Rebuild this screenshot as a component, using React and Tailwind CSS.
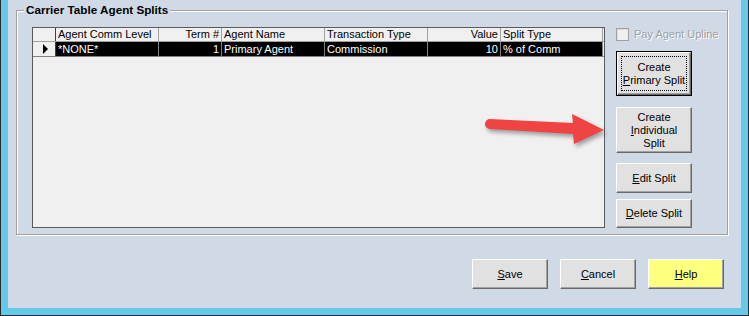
import React from "react";

const cols = [
  { label: "Agent Comm Level", w: "w-[103px]", align: "text-left", value: "*NONE*" },
  { label: "Term #", w: "w-[63px]", align: "text-right", value: "1" },
  { label: "Agent Name", w: "w-[103px]", align: "text-left", value: "Primary Agent" },
  { label: "Transaction Type", w: "w-[103px]", align: "text-left", value: "Commission" },
  { label: "Value", w: "w-[73px]", align: "text-right", value: "10" },
  { label: "Split Type", w: "w-[102px]", align: "text-left", value: "% of Comm" },
];

function WinButton({ className = "", children, focused = false }) {
  const face = (
    <div className="flex h-full w-full flex-col items-center justify-center border-t border-l border-t-white border-l-white border-r border-b border-r-[#696969] border-b-[#696969] text-center shadow-[inset_-1px_-1px_0_#a0a0a0]">
      {focused ? (
        <div className="m-[3px] flex h-[calc(100%-6px)] w-[calc(100%-6px)] flex-col items-center justify-center border border-dotted border-black">
          {children}
        </div>
      ) : (
        children
      )}
    </div>
  );
  return (
    <div className={`${focused ? "border border-black" : ""} ${className}`}>
      {face}
    </div>
  );
}

export default function App() {
  return (
    <div className="h-[316px] w-[749px] border-r border-b border-l border-[#2b2b2b] bg-[#66c9e8] pr-[7px] pb-[7px] pl-[7px] font-['Liberation_Sans',Arial,sans-serif] text-[11px] leading-[13px] text-black">
      <div className="relative h-full bg-[#d0dae6] pt-[10px]">
        {/* group box */}
        <div className="relative ml-[8px] flex h-[225px] w-[712px] border border-[#a0a0a0] pt-[16px] pl-[15px] shadow-[inset_1px_1px_0_#fff,1px_1px_0_#fff]">
          <div className="absolute -top-[9px] left-[7px] bg-[#d0dae6] px-[2px] text-[11.7px] leading-[15px] font-bold">
            Carrier Table Agent Splits
          </div>

          {/* grid */}
          <div className="h-[201px] w-[573px] border border-[#5a5a5a] bg-[#f0f0f0]">
            <div className="flex h-[14px] border-b border-[#a0a0a0]">
              <div className="w-[23px] border-r border-[#404040]" />
              {cols.map((c) => (
                <div
                  key={c.label}
                  className={`${c.w} ${c.align} border-r border-[#a0a0a0] px-[2px] whitespace-nowrap`}
                >
                  {c.label}
                </div>
              ))}
            </div>
            <div className="flex h-[15px] border-b border-[#808080]">
              <div className="flex w-[23px] items-center border-r border-[#404040] pl-[10px]">
                <div className="h-0 w-0 border-y-[5px] border-l-[5px] border-y-transparent border-l-black" />
              </div>
              {cols.map((c) => (
                <div
                  key={c.label}
                  className={`${c.w} ${c.align} border-r border-[#808080] bg-black px-[2px] pt-[1px] whitespace-nowrap text-white`}
                >
                  {c.value}
                </div>
              ))}
            </div>
          </div>

          {/* right column */}
          <div className="ml-[11px] flex w-[76px] flex-col pt-[1px]">
            <div className="flex h-[13px] items-center whitespace-nowrap">
              <div className="h-[13px] w-[13px] shrink-0 border border-[#a0a0a0] bg-[#f0f0f0] shadow-[inset_1px_1px_0_#dcdcdc]" />
              <span className="ml-[5px] text-[#a0a0a0] [text-shadow:1px_1px_0_#fff]">Pay Agent Upline</span>
            </div>
            <WinButton focused className="mt-[10px] h-[45px] w-[76px] bg-[#e1e1e1]">
              <span>Create</span>
              <span>
                <u>P</u>rimary Split
              </span>
            </WinButton>
            <WinButton className="mt-[11px] h-[46px] w-[76px] bg-[#e1e1e1]">
              <span>Create</span>
              <span>
                <u>I</u>ndividual
              </span>
              <span>Split</span>
            </WinButton>
            <WinButton className="mt-[10px] h-[30px] w-[76px] bg-[#e1e1e1]">
              <span>
                <u>E</u>dit Split
              </span>
            </WinButton>
            <WinButton className="mt-[6px] h-[29px] w-[76px] bg-[#e1e1e1]">
              <span>
                <u>D</u>elete Split
              </span>
            </WinButton>
          </div>
        </div>

        {/* bottom buttons */}
        <div className="mt-[24px] flex justify-end gap-[12px] pr-[17px]">
          <WinButton className="h-[30px] w-[76px] bg-[#e1e1e1]">
            <span>
              <u>S</u>ave
            </span>
          </WinButton>
          <WinButton className="h-[30px] w-[76px] bg-[#e1e1e1]">
            <span>
              <u>C</u>ancel
            </span>
          </WinButton>
          <WinButton className="h-[30px] w-[76px] bg-[#ffff80]">
            <span>
              <u>H</u>elp
            </span>
          </WinButton>
        </div>

        {/* annotation arrow */}
        <svg
          className="absolute top-[106px] left-[472px] h-[46px] w-[130px] drop-shadow-[2px_3px_2px_rgba(0,0,0,0.35)]"
          viewBox="0 0 130 46"
        >
          <path
            d="M10,13 L93,17 L92,8 L124,24 L94,38 L93,28 L10,23 A5,5 0 0 1 10,13 Z"
            fill="#f04343"
          />
        </svg>
      </div>
    </div>
  );
}
